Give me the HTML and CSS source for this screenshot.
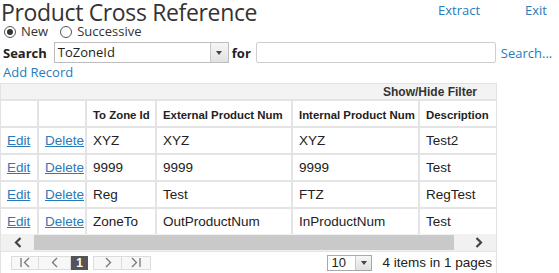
FILE: index.html
```html
<!DOCTYPE html>
<html>
<head>
<meta charset="utf-8">
<link rel="stylesheet" href="styles.css">
</head>
<body>
<div class="page">
  <header class="topbar">
    <h1 class="title">Product Cross Reference</h1>
    <nav class="toplinks">
      <a class="link" href="#">Extract</a>
      <a class="link" href="#">Exit</a>
    </nav>
  </header>
  <div class="radios">
    <label class="radio"><span class="dot checked"></span>New</label>
    <label class="radio"><span class="dot"></span>Successive</label>
  </div>
  <div class="searchrow">
    <span class="lbl">Search</span>
    <div class="select"><span class="seltext">ToZoneId</span><span class="selbtn"><span class="caret"></span></span></div>
    <span class="lbl lfor">for</span>
    <div class="input"></div>
    <a class="link slink" href="#">Search...</a>
  </div>
  <div class="addrow"><a class="link" href="#">Add Record</a></div>
  <div class="grid">
    <div class="toolbar">Show/Hide Filter</div>
    <div class="tablewrap">
      <table class="tbl">
        <colgroup>
          <col class="c1"><col class="c2"><col class="c3"><col class="c4"><col class="c5"><col class="c6">
        </colgroup>
        <thead>
          <tr><th></th><th></th><th>To Zone Id</th><th>External Product Num</th><th>Internal Product Num</th><th>Description</th></tr>
        </thead>
        <tbody>
          <tr><td><a class="ul" href="#">Edit</a></td><td><a class="ul" href="#">Delete</a></td><td>XYZ</td><td>XYZ</td><td>XYZ</td><td>Test2</td></tr>
          <tr><td><a class="ul" href="#">Edit</a></td><td><a class="ul" href="#">Delete</a></td><td>9999</td><td>9999</td><td>9999</td><td>Test</td></tr>
          <tr><td><a class="ul" href="#">Edit</a></td><td><a class="ul" href="#">Delete</a></td><td>Reg</td><td>Test</td><td>FTZ</td><td>RegTest</td></tr>
          <tr><td><a class="ul" href="#">Edit</a></td><td><a class="ul" href="#">Delete</a></td><td>ZoneTo</td><td>OutProductNum</td><td>InProductNum</td><td>Test</td></tr>
        </tbody>
      </table>
    </div>
    <div class="hscroll">
      <span class="arrow"><svg width="8" height="11" viewBox="0 0 8 11"><path d="M6.5 1L2 5.5 6.5 10" fill="none" stroke="#444" stroke-width="2.2"/></svg></span>
      <span class="thumb"></span>
      <span class="arrow"><svg width="8" height="11" viewBox="0 0 8 11"><path d="M1.5 1L6 5.5 1.5 10" fill="none" stroke="#444" stroke-width="2.2"/></svg></span>
    </div>
    <div class="pager">
      <div class="pbtns">
        <span class="pbtn w1"><svg width="14" height="11" viewBox="0 0 14 11"><path d="M3 1v9M11 1L6.5 5.5 11 10" fill="none" stroke="#777" stroke-width="1.3"/></svg></span>
        <span class="pbtn w2"><svg width="10" height="11" viewBox="0 0 10 11"><path d="M7 1L2.5 5.5 7 10" fill="none" stroke="#777" stroke-width="1.3"/></svg></span>
        <span class="pcur">1</span>
        <span class="pbtn w3"><svg width="10" height="11" viewBox="0 0 10 11"><path d="M3 1l4.5 4.5L3 10" fill="none" stroke="#777" stroke-width="1.3"/></svg></span>
        <span class="pbtn w4"><svg width="14" height="11" viewBox="0 0 14 11"><path d="M3 1l4.5 4.5L3 10M11 1v9" fill="none" stroke="#777" stroke-width="1.3"/></svg></span>
      </div>
      <div class="pinfo">
        <div class="psize"><span class="pstext">10</span><span class="psbtn"><span class="caret"></span></span></div>
        <span class="pcount">4 items in 1 pages</span>
      </div>
    </div>
  </div>
</div>
</body>
</html>
```
FILE: styles.css
```css
* { box-sizing: border-box; }
html, body { margin: 0; padding: 0; background: #fff; }
body { font-family: "Open Sans", sans-serif; color: #333; }
.page { width: 559px; }

.topbar { display: flex; justify-content: space-between; align-items: flex-start; height: 24px; }
.title { margin: 0; font-size: 23px; font-weight: 400; line-height: 24px; height: 24px; color: #333; letter-spacing: -0.35px; padding-left: 1px; }
.toplinks { display: flex; gap: 45px; padding-right: 12px; padding-top: 1px; }
.link { color: #2a7ab8; text-decoration: none; font-size: 13px; line-height: 18px; }

.radios { display: flex; gap: 12px; height: 15px; padding-left: 4px; align-items: center; font-size: 13px; }
.radio { display: flex; align-items: center; gap: 5px; line-height: 15px; }
.dot { width: 12px; height: 12px; border: 1px solid #555; border-radius: 50%; display: inline-flex; align-items: center; justify-content: center; }
.dot.checked::after { content: ""; width: 6px; height: 6px; border-radius: 50%; background: #333; }

.searchrow { display: flex; align-items: center; height: 21px; margin-top: 3px; padding-left: 3px; }
.lbl { font-weight: 700; font-size: 13px; color: #222; }
.select { width: 175px; height: 21px; border: 1px solid #bdbdbd; display: flex; justify-content: space-between; background: #fff; margin-left: 7px; }
.seltext { font-size: 13px; line-height: 19px; padding-left: 3px; color: #222; }
.selbtn { width: 18px; background: linear-gradient(#f6f6f6, #e2e2e2); border-left: 1px solid #c8c8c8; display: flex; align-items: center; justify-content: center; }
.caret { width: 0; height: 0; border-left: 3px solid transparent; border-right: 3px solid transparent; border-top: 4px solid #444; }
.lfor { margin-left: 3px; }
.input { width: 240px; height: 21px; border: 1px solid #cfcfcf; border-radius: 2px; margin-left: 5px; }
.slink { margin-left: 5px; }

.addrow { height: 20px; padding-left: 3px; line-height: 17px; }
.addrow .link { line-height: 17px; }

.grid { width: 497px; border: 1px solid #e2e2e2; font-family: "Liberation Sans", Arial, sans-serif; color: #222; }
.toolbar { height: 17px; background: #f3f3f4; border-bottom: 2px solid #e4e4e4; text-align: right; font-weight: 700; font-size: 12px; line-height: 16px; padding-right: 19px; color: #333; }
.tablewrap { overflow: hidden; }
.tbl { border-collapse: collapse; table-layout: fixed; width: 520px; }
.c1 { width: 37px; } .c2 { width: 48px; } .c3 { width: 70px; } .c4 { width: 136px; } .c5 { width: 127px; } .c6 { width: 102px; }
.tbl th, .tbl td { border-right: 2px solid #e4e4e4; border-bottom: 2px solid #e4e4e4; text-align: left; white-space: nowrap; overflow: hidden; padding: 0 0 0 6px; }
.tbl th { height: 26px; font-size: 11.4px; font-weight: 700; padding-top: 2px; }
.tbl td { height: 27px; font-size: 13.5px; }
.tbl tbody tr:last-child td { border-bottom: none; height: 26px; }
.ul { color: #2a7ab8; text-decoration: underline; }

.hscroll { height: 17px; background: #f1f1f1; display: flex; align-items: center; }
.arrow { width: 33px; height: 17px; display: flex; align-items: center; justify-content: center; }
.thumb { flex: 1; height: 15px; background: #c9c9c9; margin-right: 8px; }
.hscroll .arrow:last-child { width: 34px; }

.pager { height: 22px; border-top: 1px solid #e4e4e4; display: flex; justify-content: space-between; align-items: center; padding-left: 10px; padding-right: 4px; }
.pbtns { display: flex; align-items: center; }
.pbtn { height: 14px; border: 1px solid #dcdcdc; background: #f7f7f7; display: flex; align-items: center; justify-content: center; }
.w1 { width: 28px; } .w2 { width: 33px; margin-left: -1px; } .w3 { width: 29px; margin-left: 5px; } .w4 { width: 30px; margin-left: -1px; }
.pcur { width: 17px; height: 14px; background: #555; color: #fff; font-size: 12px; line-height: 14px; text-align: center; font-weight: 700; }
.pinfo { display: flex; align-items: center; gap: 10px; }
.psize { width: 45px; height: 16px; border: 1px solid #a8a8a8; display: flex; justify-content: space-between; }
.pstext { font-size: 13px; line-height: 14px; padding-left: 3px; }
.psbtn { width: 16px; background: linear-gradient(#f6f6f6, #e0e0e0); border-left: 1px solid #c8c8c8; display: flex; align-items: center; justify-content: center; }
.pcount { font-size: 13.5px; color: #222; }
```
